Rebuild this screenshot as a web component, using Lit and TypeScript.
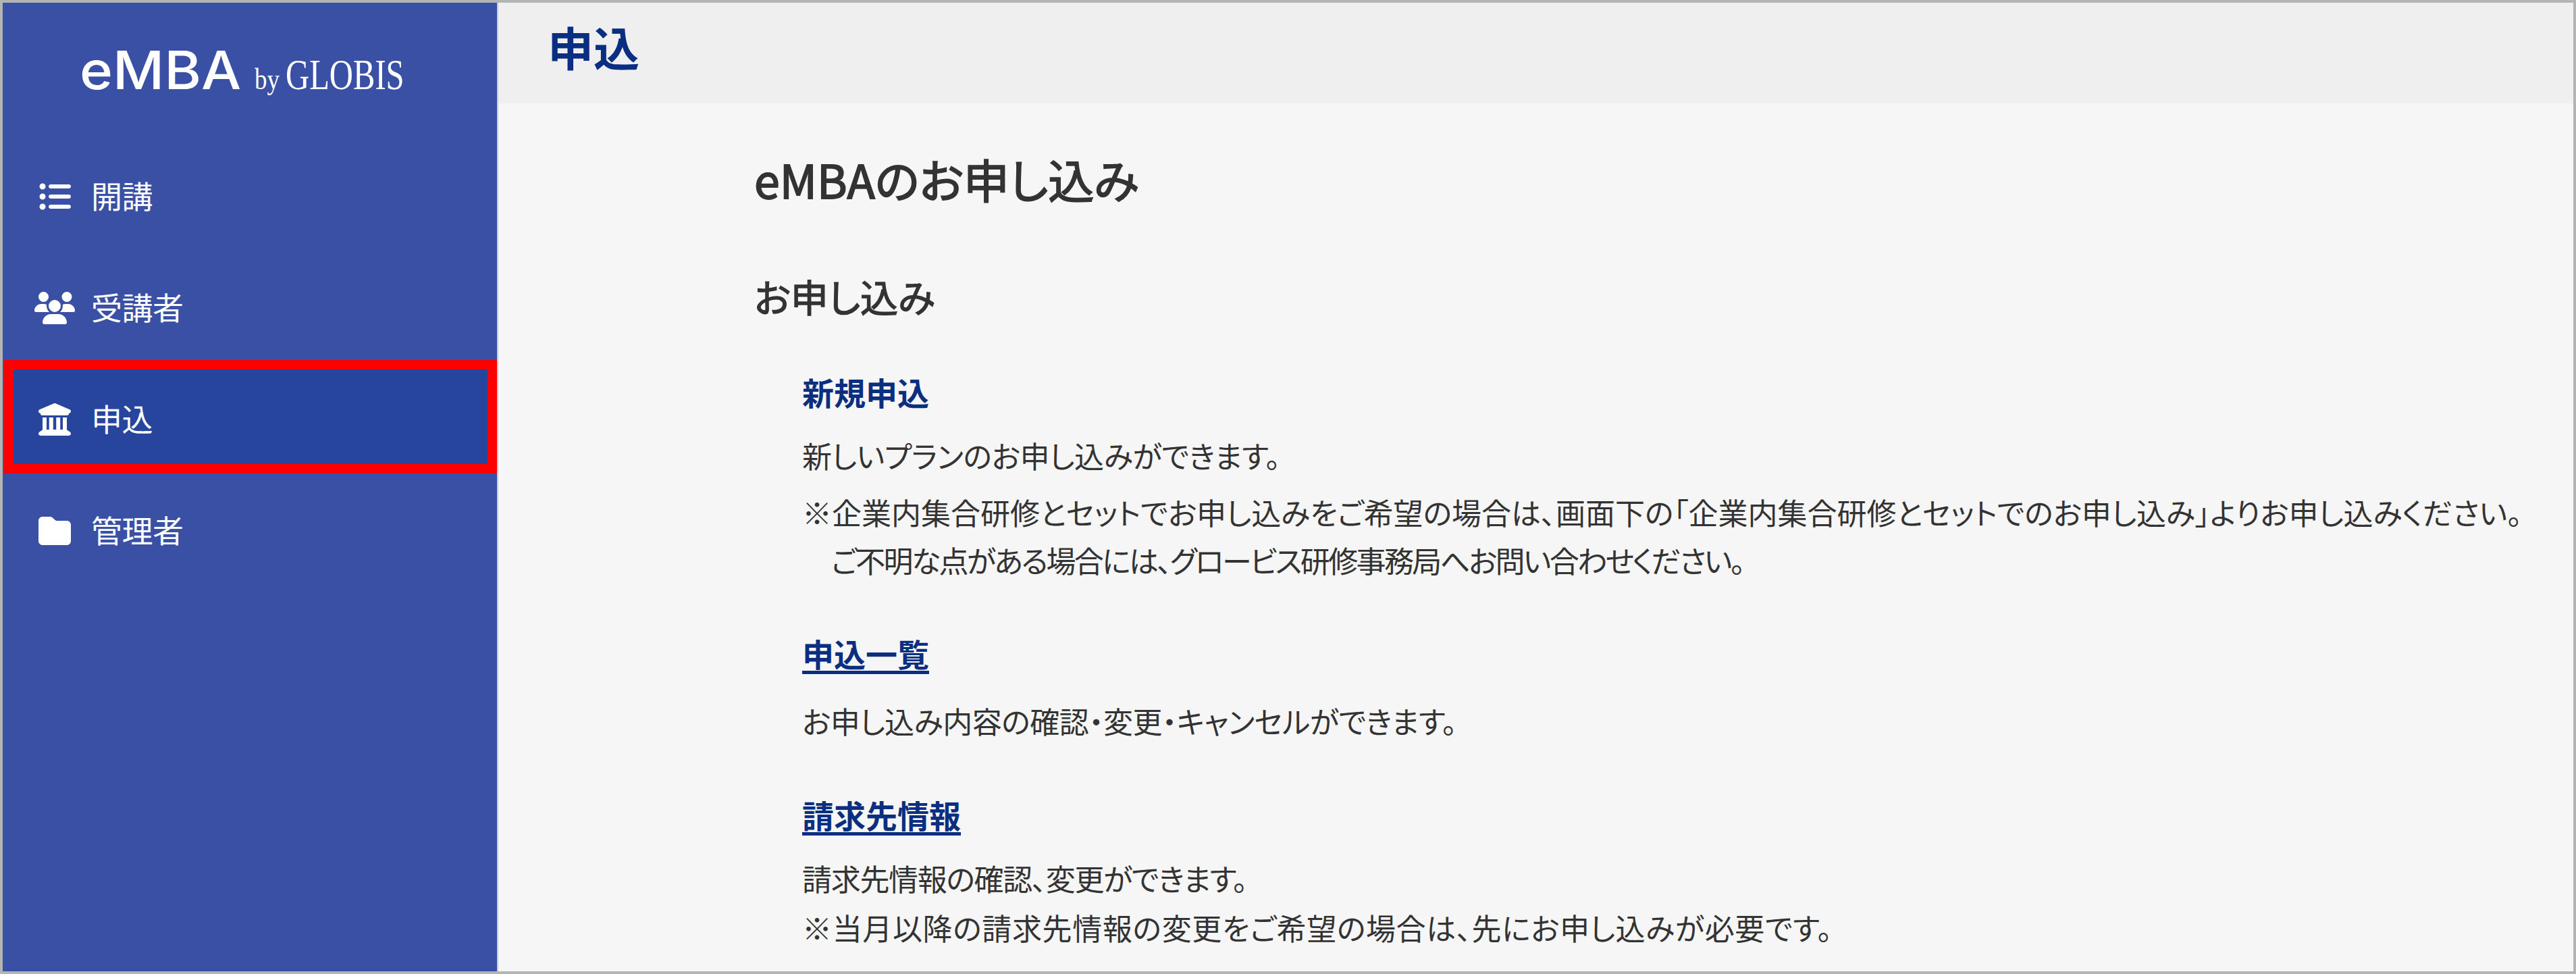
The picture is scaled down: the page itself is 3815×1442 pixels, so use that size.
import { LitElement, html, css, svg } from "lit";
import { customElement } from "lit/decorators.js";

const ICONS = {
  list: { vb: "0 0 512 512", d: "M64 144a48 48 0 1 0 0-96 48 48 0 1 0 0 96zM192 64c-17.7 0-32 14.3-32 32s14.3 32 32 32H480c17.7 0 32-14.3 32-32s-14.3-32-32-32H192zm0 160c-17.7 0-32 14.3-32 32s14.3 32 32 32H480c17.7 0 32-14.3 32-32s-14.3-32-32-32H192zm0 160c-17.7 0-32 14.3-32 32s14.3 32 32 32H480c17.7 0 32-14.3 32-32s-14.3-32-32-32H192zM64 464a48 48 0 1 0 0-96 48 48 0 1 0 0 96zm0-160a48 48 0 1 0 0-96 48 48 0 1 0 0 96z" },
  users: { vb: "0 0 640 512", d: "M144 0a80 80 0 1 1 0 160A80 80 0 1 1 144 0zM512 0a80 80 0 1 1 0 160A80 80 0 1 1 512 0zM0 298.7C0 239.8 47.8 192 106.7 192h42.7c15.9 0 31 3.5 44.6 9.7c-1.3 7.2-1.9 14.7-1.9 22.3c0 38.2 16.8 72.5 43.3 96c-.2 0-.4 0-.7 0H21.3C9.6 320 0 310.4 0 298.7zM405.3 320c-.2 0-.4 0-.7 0c26.6-23.5 43.3-57.8 43.3-96c0-7.6-.7-15-1.9-22.3c13.6-6.3 28.7-9.7 44.6-9.7h42.7C592.2 192 640 239.8 640 298.7c0 11.8-9.6 21.3-21.3 21.3H405.3zM224 224a96 96 0 1 1 192 0 96 96 0 1 1 -192 0zM128 485.3C128 411.7 187.7 352 261.3 352H378.7C452.3 352 512 411.7 512 485.3c0 14.7-11.9 26.7-26.7 26.7H154.7c-14.7 0-26.7-11.9-26.7-26.7z" },
  bank: { vb: "0 0 512 512", d: "M243.4 2.6l-224 96c-14 6-21.8 21-18.7 35.8S16.8 160 32 160v8c0 13.3 10.7 24 24 24H456c13.3 0 24-10.7 24-24v-8c15.2 0 28.3-10.7 31.3-25.6s-4.8-29.9-18.7-35.8l-224-96c-8-3.4-17.2-3.4-25.2 0zM128 224H64V420.3c-.6 .3-1.2 .7-1.8 1.1l-48 32c-11.7 7.8-17 22.4-12.9 35.9S17.9 512 32 512H480c14.1 0 26.2-8.9 30.6-22.7s-1.2-28.1-12.9-35.9l-48-32c-.6-.4-1.2-.7-1.8-1.1V224H384V416H344V224H280V416H232V224H168V416H128V224z" },
  folder: { vb: "0 0 512 512", d: "M64 480H448c35.3 0 64-28.7 64-64V160c0-35.3-28.7-64-64-64H298.5c-17 0-33.3-6.7-45.3-18.7L226.7 50.7c-12-12-28.3-18.7-45.3-18.7H64C28.7 32 0 60.7 0 96V416c0 35.3 28.7 64 64 64z" },
};

type IconName = keyof typeof ICONS;

const NAV: { icon: IconName; label: string; active?: boolean }[] = [
  { icon: "list", label: "開講" },
  { icon: "users", label: "受講者" },
  { icon: "bank", label: "申込", active: true },
  { icon: "folder", label: "管理者" },
];

@customElement("app-root")
export class AppRoot extends LitElement {
  static styles = css`
    :host {
      display: block;
      width: 3815px;
      height: 1442px;
      font-family: "Noto Sans CJK JP", "Noto Sans", sans-serif;
      font-feature-settings: "palt";
      color: #333;
    }
    .frame {
      box-sizing: border-box;
      width: 100%;
      height: 100%;
      border: 4px solid #b4b4b4;
      display: flex;
      overflow: hidden;
      background: #f6f6f6;
    }
    .side {
      width: 732px;
      flex: none;
      background: #3a50a4;
      color: #fff;
      border-right: 2px solid #c9cde0;
      box-sizing: content-box;
    }
    .logo {
      height: 204px;
      box-sizing: border-box;
      padding: 55px 0 0 114px;
      display: flex;
      align-items: baseline;
      line-height: 90px;
      white-space: nowrap;
    }
    .logo-em {
      font-family: Inter, sans-serif;
      font-feature-settings: normal;
      font-weight: 500;
      font-size: 78px;
      display: inline-block;
      transform: scaleX(1.07);
      transform-origin: left;
    }
    .logo-by {
      font-family: "Liberation Serif", serif;
      font-feature-settings: normal;
      font-size: 44px;
      margin-left: 35px;
      display: inline-block;
      width: 37px;
      transform: scaleX(0.84);
      transform-origin: left;
    }
    .logo-gl {
      font-family: "Liberation Serif", serif;
      font-feature-settings: normal;
      font-size: 64px;
      margin-left: 9px;
      display: inline-block;
      transform: scaleX(0.76);
      transform-origin: left;
    }
    .item {
      position: relative;
      height: 165px;
      display: flex;
      align-items: center;
      padding-left: 47px;
      gap: 24px;
      font-size: 46px;
      letter-spacing: -0.5px;
    }
    .mark {
      position: absolute;
      left: 2px;
      right: 0;
      top: -5px;
      bottom: 2px;
      background: #27459d;
      border: 14px solid #ff0000;
    }
    .ico {
      position: relative;
      width: 60px;
      height: 48px;
      flex: none;
      display: flex;
      justify-content: center;
    }
    .ico svg {
      height: 48px;
      fill: #fff;
      display: block;
    }
    .lbl {
      position: relative;
      margin-top: -6px;
    }
    .main {
      flex: 1;
      min-width: 0;
    }
    .head {
      height: 149px;
      box-sizing: border-box;
      background: #efefef;
      color: #0a2f82;
      font-size: 68px;
      font-weight: 700;
      line-height: 68px;
      padding: 31px 0 0 73px;
    }
    .body {
      padding: 72px 0 0 379px;
    }
    h1 {
      margin: 0;
      font-size: 68px;
      line-height: 80px;
      font-weight: 400;
      -webkit-text-stroke: 1.8px #333;
    }
    h2 {
      margin: 93px 0 0;
      font-size: 56px;
      line-height: 80px;
      font-weight: 400;
      -webkit-text-stroke: 1.4px #333;
    }
    .sec {
      padding-left: 71px;
      margin-top: 65px;
    }
    h3 {
      margin: 0 0 22px;
      font-size: 47px;
      line-height: 73px;
      font-weight: 700;
      color: #0a2e80;
    }
    h3 a {
      color: inherit;
      text-decoration: underline;
      text-decoration-thickness: 5px;
      text-underline-offset: 6px;
    }
    p {
      margin: 0;
      font-size: 44px;
      line-height: 73px;
      white-space: nowrap;
    }
    .note {
      margin: 12px 0 3px;
      line-height: 71px;
      padding-left: 43px;
      text-indent: -43px;
    }
    .fit-plan { letter-spacing: -0.3px; }
    .fit-help { letter-spacing: -2.6px; }
    .fit-list { letter-spacing: -0.44px; margin-top: 28px; }
    .fit-bill { letter-spacing: -1.3px; }
    .fit-warn { letter-spacing: 0.65px; }
  `;

  private icon(name: IconName) {
    const i = ICONS[name];
    return html`<span class="ico"><svg viewBox=${i.vb}>${svg`<path d=${i.d}></path>`}</svg></span>`;
  }

  render() {
    return html`
      <div class="frame">
        <aside class="side">
          <div class="logo">
            <span class="logo-em">eMBA</span><span class="logo-by">by</span><span class="logo-gl">GLOBIS</span>
          </div>
          <nav>
            ${NAV.map(
              (n) => html`<div class="item">
                ${n.active ? html`<div class="mark"></div>` : ""}
                ${this.icon(n.icon)}<span class="lbl">${n.label}</span>
              </div>`
            )}
          </nav>
        </aside>
        <main class="main">
          <div class="head">申込</div>
          <div class="body">
            <h1>eMBAのお申し込み</h1>
            <h2>お申し込み</h2>
            <section class="sec">
              <h3>新規申込</h3>
              <p class="fit-plan">新しいプランのお申し込みができます。</p>
              <p class="note">※企業内集合研修とセットでお申し込みをご希望の場合は、画面下の「企業内集合研修とセットでのお申し込み」よりお申し込みください。<br /><span class="fit-help">ご不明な点がある場合には、グロービス研修事務局へお問い合わせください。</span></p>
            </section>
            <section class="sec">
              <h3><a>申込一覧</a></h3>
              <p class="fit-list">お申し込み内容の確認・変更・キャンセルができます。</p>
            </section>
            <section class="sec">
              <h3><a>請求先情報</a></h3>
              <p class="fit-bill">請求先情報の確認、変更ができます。</p>
              <p class="fit-warn">※当月以降の請求先情報の変更をご希望の場合は、先にお申し込みが必要です。</p>
            </section>
          </div>
        </main>
      </div>
    `;
  }
}
